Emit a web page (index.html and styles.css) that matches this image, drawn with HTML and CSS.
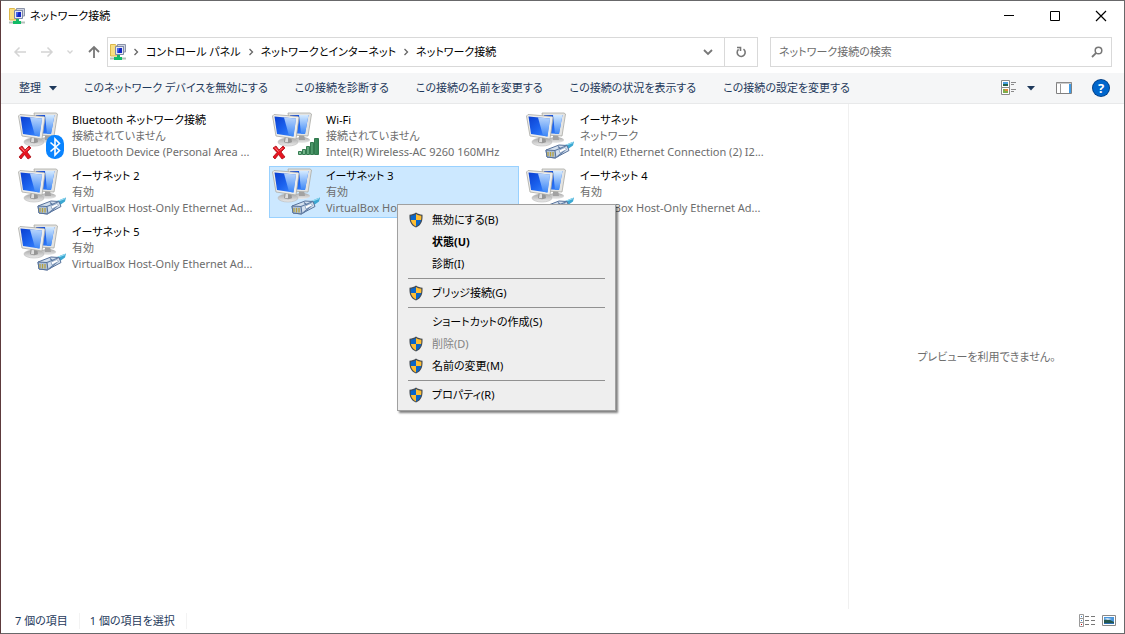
FILE: index.html
```
<!DOCTYPE html>
<html lang="ja">
<head>
    <meta charset="UTF-8">
    <meta name="viewport" content="width=device-width, initial-scale=1.0">
    <title>ネットワーク接続</title>
    <link rel="stylesheet" href="styles.css">
</head>
<body>

<!-- Shared icons -->
<svg class="defs" width="0" height="0" aria-hidden="true">
    <defs>
        <linearGradient id="screen" x1="0" y1="0" x2="1" y2="1">
            <stop offset="0" stop-color="#0b3fd0"/>
            <stop offset="0.5" stop-color="#1b62ee"/>
            <stop offset="1" stop-color="#3f8cff"/>
        </linearGradient>
        <linearGradient id="shine" x1="0" y1="0" x2="0" y2="1">
            <stop offset="0" stop-color="#d4eaff"/>
            <stop offset="1" stop-color="#3b86f6"/>
        </linearGradient>
        <linearGradient id="stand" x1="0" y1="0" x2="0" y2="1">
            <stop offset="0" stop-color="#a9a9a9"/>
            <stop offset="1" stop-color="#ececec"/>
        </linearGradient>
        <linearGradient id="bars" x1="0" y1="0" x2="1" y2="0">
            <stop offset="0" stop-color="#8cc8a0"/>
            <stop offset="1" stop-color="#2f8050"/>
        </linearGradient>
    </defs>

    <symbol id="i-folder" viewBox="0 0 16 16">
        <path d="M0.500 0.500h5l1 1.500h2v10h-8z" fill="#f9df82" stroke="#dcb84c"/>
        <path d="M7.500 0.500h8v7.500h-8z" fill="#cfd4e2" stroke="#8c94a8"/>
        <path d="M9 2h5v5H9z" fill="#6f80c0"/>
        <path d="M5.500 2.500h8v8h-8z" fill="#e6e9f2" stroke="#7f89a6"/>
        <path d="M7 4h5v5H7z" fill="#1326c4"/>
        <path d="M7 4h2.500l-1.500 5H7z" fill="#4866ea"/>
        <path d="M7 11h3v2H7z" fill="#19b36a"/>
        <path d="M0 13.500h16v2H0z" fill="#b4c0ba"/>
        <path d="M4 13h8v3H4z" fill="#12bb66"/>
    </symbol>

    <symbol id="i-computers" viewBox="0 0 48 48">
        <ellipse cx="30" cy="28" rx="8" ry="3" fill="url(#stand)"/>
        <path d="M27 22l5 0 1 6h-6z" fill="#a2a2a2"/>
        <path d="M16 1l22 0 1.500 1-3.500 22-17-1z" fill="#e4e4e2" stroke="#aaa9a5" stroke-width="0.800"/>
        <path d="M18 3l18.500 0-3.500 19-14-1z" fill="url(#screen)"/>
        <path d="M27 3l9.500 0-3.500 19-4-.3z" fill="url(#shine)"/>
        <ellipse cx="16" cy="30" rx="10" ry="4" fill="url(#stand)" stroke="#b8b8b8" stroke-width="0.600"/>
        <path d="M13 23l6 1 1 6c-2 1.500-6 1.500-8 0z" fill="#969696"/>
        <path d="M14 24l2 .3 0 6-3-.3z" fill="#dedede"/>
        <path d="M2 2.500l24 2 1 1-3 21.500-20-3-3.500-20z" fill="#ededeb" stroke="#aaa9a5" stroke-width="0.800"/>
        <path d="M2.500 4.500l21.500 2-2.500 18-16.500-2.500z" fill="url(#screen)"/>
        <path d="M12 5.400l12 1.100-2.500 18-4.500-.7z" fill="url(#shine)" opacity="0.850"/>
    </symbol>

    <symbol id="i-plug" viewBox="0 0 48 48">
        <path d="M37 34c3-1 6-3 11-4.500l-1 4-7 5z" fill="#3ba8d2"/>
        <path d="M39 33.500l8-3" stroke="#9bddf3" stroke-width="1.200"/>
        <path d="M20 38l13-5 8 .5 2 5-14 7.500-8-1z" fill="#d5e1ef" stroke="#56719a"/>
        <path d="M20 38l9 .5 1 7.500-9-1z" fill="#adbfd4" stroke="#56719a"/>
        <path d="M29 38.500l12-5M31 45l8-7M32 34.500l6 5" stroke="#5f7ca4" stroke-width="1.200" fill="none"/>
        <path d="M22 40v4M24.500 40v4.500M27 40v4.500" stroke="#b8a13a" stroke-width="1.200"/>
        <path d="M33 38l6-2.500 1.500 2-6.500 3.500z" fill="#fff" stroke="#6a86ad" stroke-width="0.600"/>
    </symbol>

    <symbol id="i-cross" viewBox="0 0 48 48">
        <path d="M1 36l3-2 3 4 4-4 2 2-4 4 4 5-3 2-3.500-4.500L3 47l-2-2 4-4.500z" fill="#e81420" stroke="#a80c14" stroke-width="0.800"/>
        <path d="M3 35.500l3.500 4M10.500 36l-2.500 2.500" stroke="#ff8b8b"/>
    </symbol>

    <symbol id="i-bluetooth" viewBox="0 0 48 48">
        <rect x="28" y="23" width="18" height="24" rx="8.500" fill="#0a84ff"/>
        <path d="M32.500 30.500l9 8-4.500 4.500v-16l4.500 4.500-9 8" fill="none" stroke="#fff" stroke-width="1.600"/>
    </symbol>

    <symbol id="i-signal" viewBox="0 0 48 48">
        <g fill="url(#bars)" stroke="#256f43" stroke-width="0.900">
            <path d="M26.500 39.500h3v3h-3zM30.500 37.500h3v5h-3zM34.500 34.500h3v8h-3zM38.500 30.500h3v12h-3zM42.500 26.500h4v16h-4z"/>
        </g>
    </symbol>

    <symbol id="i-shield" viewBox="0 0 16 16">
        <path d="M8 .5C6 2 4 2.600 1.500 2.700c-.3 6.300 1 10.300 6.500 12.800 5.500-2.500 6.800-6.500 6.500-12.800C12 2.600 10 2 8 .5z" fill="#444b52"/>
        <path d="M8 2C6.300 3.100 4.700 3.600 2.700 3.800 2.600 5.300 2.600 6.700 2.900 8H8z" fill="#0a66c9"/>
        <path d="M8 2c1.700 1.100 3.300 1.600 5.300 1.800.1 1.500.1 2.900-.2 4.200H8z" fill="#ffbe32"/>
        <path d="M2.900 8c.6 3.100 2.100 5 5.100 6.400V8z" fill="#ffbe32"/>
        <path d="M13.100 8c-.6 3.100-2.100 5-5.100 6.400V8z" fill="#0a66c9"/>
    </symbol>
</svg>

<div class="window">

    <!-- Title bar -->
    <header class="titlebar">
        <svg class="icon16"><use href="#i-folder"/></svg>
        <h1>ネットワーク接続</h1>
        <div class="window-buttons">
            <button type="button" aria-label="最小化">
                <svg class="icon12" viewBox="0 0 12 12"><path d="M1 5.500h10" stroke="#000"/></svg>
            </button>
            <button type="button" aria-label="最大化">
                <svg class="icon12" viewBox="0 0 12 12"><path d="M1.500 1.500h9v9h-9z" fill="none" stroke="#000"/></svg>
            </button>
            <button type="button" aria-label="閉じる">
                <svg class="icon12" viewBox="0 0 12 12"><path d="M1 1l10 10M11 1L1 11" stroke="#000" stroke-width="1.200"/></svg>
            </button>
        </div>
    </header>

    <!-- Navigation -->
    <nav class="navbar">
        <div class="history">
            <button type="button" aria-label="戻る" disabled>
                <svg class="icon14" viewBox="0 0 14 14"><path d="M13 7H2M6.500 2.500L2 7l4.500 4.500" fill="none" stroke="#d4d4d4" stroke-width="1.500"/></svg>
            </button>
            <button type="button" aria-label="進む" disabled>
                <svg class="icon14" viewBox="0 0 14 14"><path d="M1 7h11M7.500 2.500L12 7l-4.500 4.500" fill="none" stroke="#d4d4d4" stroke-width="1.500"/></svg>
            </button>
            <button type="button" aria-label="最近の場所" disabled>
                <svg class="icon8" viewBox="0 0 8 8"><path d="M1.500 2.500L4 5l2.500-2.500" fill="none" stroke="#d4d4d4" stroke-width="1.300"/></svg>
            </button>
            <button type="button" aria-label="上へ">
                <svg class="icon14" viewBox="0 0 14 14"><path d="M7 13V2M2 7l5-5 5 5" fill="none" stroke="#777" stroke-width="1.800"/></svg>
            </button>
        </div>
        <div class="address">
            <svg class="icon16"><use href="#i-folder"/></svg>
            <svg class="crumb-sep" viewBox="0 0 8 8"><path d="M2.500 1L5.500 4l-3 3" fill="none" stroke="#666" stroke-width="1.300"/></svg>
            <a href="#">コントロール パネル</a>
            <svg class="crumb-sep" viewBox="0 0 8 8"><path d="M2.500 1L5.500 4l-3 3" fill="none" stroke="#666" stroke-width="1.300"/></svg>
            <a href="#">ネットワークとインターネット</a>
            <svg class="crumb-sep" viewBox="0 0 8 8"><path d="M2.500 1L5.500 4l-3 3" fill="none" stroke="#666" stroke-width="1.300"/></svg>
            <a href="#">ネットワーク接続</a>
            <button type="button" class="address-drop" aria-label="以前の場所">
                <svg class="icon12" viewBox="0 0 12 12"><path d="M2 4l4 4 4-4" fill="none" stroke="#777" stroke-width="1.800"/></svg>
            </button>
            <button type="button" class="refresh" aria-label="最新の情報に更新">
                <svg class="icon12" viewBox="0 0 12 12"><path d="M8.500 3.200A4 4 0 1 1 3.600 3.400M2 1.500h3.500V5" fill="none" stroke="#777" stroke-width="1.600"/></svg>
            </button>
        </div>
        <label class="search">
            <input type="text" placeholder="ネットワーク接続の検索" aria-label="ネットワーク接続の検索">
            <svg class="icon12" viewBox="0 0 12 12"><circle cx="7.500" cy="4.500" r="3.300" fill="none" stroke="#777" stroke-width="1.500"/><path d="M5.200 6.800L1 11" stroke="#777" stroke-width="1.800"/></svg>
        </label>
    </nav>

    <!-- Command bar -->
    <div class="commands">
        <button type="button" class="organize">整理
            <svg class="caret" viewBox="0 0 8 5"><path d="M0 0h8L4 4.500z" fill="#1e395b"/></svg>
        </button>
        <button type="button">このネットワーク デバイスを無効にする</button>
        <button type="button">この接続を診断する</button>
        <button type="button">この接続の名前を変更する</button>
        <button type="button">この接続の状況を表示する</button>
        <button type="button">この接続の設定を変更する</button>
        <div class="view-tools">
            <button type="button" class="view-menu" aria-label="表示方法の変更">
                <svg class="icon16" viewBox="0 0 16 16">
                    <path d="M.5 .5h8v7h-8zM.5 7.500h8v7h-8z" fill="#fff" stroke="#8a8a8a"/>
                    <path d="M2 2h5v4H2z" fill="#4b9ee0"/><path d="M2 4h5v2H2z" fill="#23614d"/>
                    <path d="M2 9h5v4H2z" fill="#7fae4c"/><path d="M4 9h3v2H4z" fill="#e08a3c"/>
                    <path d="M10 2.500h5M10 4.500h3M10 9.500h5M10 11.500h3" stroke="#8a8a8a"/>
                </svg>
                <svg class="caret" viewBox="0 0 8 5"><path d="M0 0h8L4 4.500z" fill="#1e395b"/></svg>
            </button>
            <button type="button" aria-label="プレビュー ウィンドウ">
                <svg class="icon16" viewBox="0 0 16 16">
                    <path d="M.5 2.500h15v11H.5z" fill="#fff" stroke="#808080"/>
                    <path d="M0 3h16M4.500 4v9" stroke="#999"/>
                    <path d="M13 4h2v9h-2z" fill="#3f9be6"/>
                </svg>
            </button>
            <button type="button" class="help" aria-label="ヘルプ">?</button>
        </div>
    </div>

    <main class="content">
        <ul class="connections">
            <li>
                <button type="button" class="tile">
                    <svg class="tile-icon"><use href="#i-computers"/><use href="#i-cross"/><use href="#i-bluetooth"/></svg>
                    <span class="tile-text">
                        <span class="name">Bluetooth ネットワーク接続</span>
                        <span>接続されていません</span>
                        <span>Bluetooth Device (Personal Area ...</span>
                    </span>
                </button>
            </li>
            <li>
                <button type="button" class="tile">
                    <svg class="tile-icon"><use href="#i-computers"/><use href="#i-cross"/><use href="#i-signal"/></svg>
                    <span class="tile-text">
                        <span class="name">Wi-Fi</span>
                        <span>接続されていません</span>
                        <span>Intel(R) Wireless-AC 9260 160MHz</span>
                    </span>
                </button>
            </li>
            <li>
                <button type="button" class="tile">
                    <svg class="tile-icon"><use href="#i-computers"/><use href="#i-plug"/></svg>
                    <span class="tile-text">
                        <span class="name">イーサネット</span>
                        <span>ネットワーク</span>
                        <span>Intel(R) Ethernet Connection (2) I2...</span>
                    </span>
                </button>
            </li>
            <li>
                <button type="button" class="tile">
                    <svg class="tile-icon"><use href="#i-computers"/><use href="#i-plug"/></svg>
                    <span class="tile-text">
                        <span class="name">イーサネット 2</span>
                        <span>有効</span>
                        <span>VirtualBox Host-Only Ethernet Ad...</span>
                    </span>
                </button>
            </li>
            <li class="has-menu">
                <button type="button" class="tile selected">
                    <svg class="tile-icon"><use href="#i-computers"/><use href="#i-plug"/></svg>
                    <span class="tile-text">
                        <span class="name">イーサネット 3</span>
                        <span>有効</span>
                        <span>VirtualBox Host-Only Ethernet Ad...</span>
                    </span>
                </button>

                <!-- Context menu -->
                <div class="menu" role="menu">
                    <button type="button" role="menuitem"><svg class="icon16"><use href="#i-shield"/></svg>無効にする(B)</button>
                    <button type="button" role="menuitem" class="no-icon default">状態(U)</button>
                    <button type="button" role="menuitem" class="no-icon">診断(I)</button>
                    <hr>
                    <button type="button" role="menuitem"><svg class="icon16"><use href="#i-shield"/></svg>ブリッジ接続(G)</button>
                    <hr>
                    <button type="button" role="menuitem" class="no-icon">ショートカットの作成(S)</button>
                    <button type="button" role="menuitem" disabled><svg class="icon16"><use href="#i-shield"/></svg>削除(D)</button>
                    <button type="button" role="menuitem"><svg class="icon16"><use href="#i-shield"/></svg>名前の変更(M)</button>
                    <hr>
                    <button type="button" role="menuitem"><svg class="icon16"><use href="#i-shield"/></svg>プロパティ(R)</button>
                </div>
            </li>
            <li>
                <button type="button" class="tile">
                    <svg class="tile-icon"><use href="#i-computers"/><use href="#i-plug"/></svg>
                    <span class="tile-text">
                        <span class="name">イーサネット 4</span>
                        <span>有効</span>
                        <span>VirtualBox Host-Only Ethernet Ad...</span>
                    </span>
                </button>
            </li>
            <li>
                <button type="button" class="tile">
                    <svg class="tile-icon"><use href="#i-computers"/><use href="#i-plug"/></svg>
                    <span class="tile-text">
                        <span class="name">イーサネット 5</span>
                        <span>有効</span>
                        <span>VirtualBox Host-Only Ethernet Ad...</span>
                    </span>
                </button>
            </li>
        </ul>
        <aside class="preview">プレビューを利用できません。</aside>
    </main>

    <!-- Status bar -->
    <footer class="status">
        <span>7 個の項目</span>
        <span>1 個の項目を選択</span>
        <div class="status-views">
            <button type="button" aria-label="詳細">
                <svg class="icon16" viewBox="0 0 16 16">
                    <path d="M.5 1.500h4v4h-4zM.5 5.500h4v4h-4zM.5 9.500h4v4h-4z" fill="#fff" stroke="#999"/>
                    <path d="M2 3h1v1H2zM2 7h1v1H2z" fill="#3b7fc4"/><path d="M2 11h1v1H2z" fill="#c00"/>
                    <path d="M6 3.500h4M12 3.500h4M6 7.500h4M12 7.500h4M6 11.500h4M12 11.500h4" stroke="#777"/>
                </svg>
            </button>
            <button type="button" aria-label="大アイコン">
                <svg class="icon14" viewBox="0 0 14 14">
                    <path d="M.5 1.500h13v10H.5z" fill="#fff" stroke="#888"/>
                    <path d="M2 3h10v7H2z" fill="#4a96dc"/>
                    <path d="M2 6l4-1 6 3v2H2z" fill="#24584f"/>
                    <path d="M2 5l3-1 5 1-4 1z" fill="#cfe6f8"/>
                    <path d="M2 9h10v1H2z" fill="#2d70b5"/>
                </svg>
            </button>
        </div>
    </footer>
</div>

</body>
</html>
```
FILE: styles.css
```
* {
    box-sizing: border-box;
}

body {
    margin: 0;
    font-family: "Noto Sans", "Noto Sans CJK JP", sans-serif;
    font-size: 11px;
    line-height: 16px;
    font-feature-settings: "palt";
    color: #000;
    background-color: #fff;
}

button, input {
    font: inherit;
    font-feature-settings: inherit;
    color: inherit;
    background: none;
    border: none;
    padding: 0;
    margin: 0;
}

svg {
    display: block;
    flex: none;
}

.defs {
    position: absolute;
}

.icon8 {
    width: 8px;
    height: 8px;
}

.icon12 {
    width: 12px;
    height: 12px;
}

.icon14 {
    width: 14px;
    height: 14px;
}

.icon16 {
    width: 16px;
    height: 16px;
}

.window {
    display: flex;
    flex-direction: column;
    min-height: 100vh;
    border: 1px solid #68686a;
    border-left-color: #5d3a3c;
}

/* Title bar */
.titlebar {
    display: flex;
    align-items: center;
    height: 29px;
    padding-left: 8px;
    gap: 5px;
}

.titlebar h1 {
    margin: 0;
    font-size: 11px;
    font-weight: normal;
}

.window-buttons {
    display: flex;
    margin-left: auto;
}

.window-buttons button {
    display: flex;
    align-items: center;
    justify-content: center;
    width: 46px;
    height: 29px;
}

/* Navigation */
.navbar {
    display: flex;
    align-items: center;
    height: 43px;
    padding-right: 12px;
}

.history {
    display: flex;
    align-items: center;
    justify-content: space-between;
    width: 106px;
    padding: 0 6px 0 12px;
}

.address {
    display: flex;
    flex: 1;
    align-items: center;
    height: 30px;
    padding-left: 2px;
    border: 1px solid #d9d9d9;
    white-space: nowrap;
}

.address a {
    color: #000;
    text-decoration: none;
}

.crumb-sep {
    width: 8px;
    height: 8px;
    margin: 0 6px;
}

.address-drop {
    display: flex;
    align-items: center;
    justify-content: center;
    width: 32px;
    height: 28px;
    margin-left: auto;
}

.refresh {
    display: flex;
    align-items: center;
    justify-content: center;
    width: 33px;
    height: 28px;
    border-left: 1px solid #d9d9d9;
}

.search {
    display: flex;
    align-items: center;
    width: 342px;
    height: 30px;
    margin-left: 12px;
    padding: 0 8px;
    border: 1px solid #d9d9d9;
}

.search input {
    flex: 1;
    min-width: 0;
    outline: none;
}

.search input::placeholder {
    color: #6d6d6d;
    opacity: 1;
}

/* Command bar */
.commands {
    display: flex;
    align-items: center;
    height: 31px;
    padding: 0 15px 0 18px;
    gap: 27px;
    background-color: #f5f6f7;
    border-bottom: 1px solid #e8e9ea;
    color: #1e395b;
    white-space: nowrap;
}

.caret {
    width: 8px;
    height: 5px;
}

.organize {
    display: flex;
    align-items: center;
    gap: 8px;
}

.view-tools {
    display: flex;
    align-items: center;
    gap: 21px;
    margin-left: auto;
}

.view-menu {
    display: flex;
    align-items: center;
    gap: 10px;
}

.help {
    width: 16px;
    height: 16px;
    border-radius: 50%;
    background-color: #0066cc;
    box-shadow: 0 0 0 1px #003f86;
    color: #fff;
    font-size: 13px;
    font-weight: bold;
    line-height: 16px;
}

/* Content */
.content {
    display: flex;
    flex: 1;
}

.connections {
    flex: 1;
    display: grid;
    grid-template-columns: repeat(auto-fill, 250px);
    grid-auto-rows: 52px;
    gap: 4px;
    margin: 0;
    padding: 6px 14px;
    list-style: none;
}

.has-menu {
    position: relative;
}

.tile {
    display: flex;
    width: 100%;
    height: 52px;
    padding: 1px 2px;
    border: 1px solid transparent;
    text-align: left;
    color: #6d6d6d;
    white-space: nowrap;
}

.tile.selected {
    background-color: #cce8ff;
    border-color: #99d1ff;
}

.tile-icon {
    width: 48px;
    height: 48px;
    margin-right: 6px;
}

.tile-text {
    display: flex;
    flex-direction: column;
    min-width: 0;
}

.name {
    color: #000;
}

.preview {
    display: flex;
    align-items: center;
    justify-content: center;
    width: 276px;
    border-left: 1px solid #f0f0f0;
    color: #6d6d6d;
}

/* Context menu */
.menu {
    position: absolute;
    z-index: 1;
    left: 128px;
    top: 38px;
    width: 219px;
    padding: 4px 2px;
    background-color: #eee;
    border: 1px solid #a0a0a0;
    box-shadow: 2px 2px 2px rgba(0, 0, 0, 0.5);
}

.menu button {
    display: flex;
    align-items: center;
    width: 100%;
    height: 22px;
    padding-left: 8px;
    gap: 8px;
}

.menu .no-icon {
    padding-left: 32px;
}

.menu .default {
    font-weight: bold;
}

.menu button:disabled {
    color: #838383;
}

.menu hr {
    margin: 3px 8px;
    border: none;
    border-top: 1px solid #919191;
}

/* Status bar */
.status {
    display: flex;
    align-items: center;
    height: 24px;
    padding: 0 8px 0 14px;
    color: #1e395b;
}

.status > span {
    padding-right: 11px;
    margin-right: 10px;
    border-right: 1px solid #f3f3f3;
}

.status-views {
    display: flex;
    align-items: center;
    gap: 7px;
    margin-left: auto;
}
```
